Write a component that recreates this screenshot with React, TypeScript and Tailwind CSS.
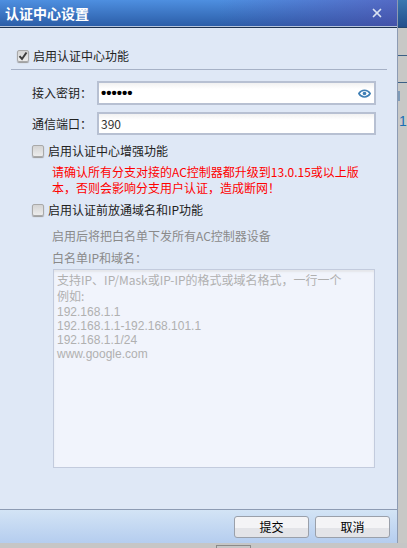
import React from 'react';
import { X } from 'lucide-react';

const font = { fontFamily: '"Noto Sans CJK SC", "Liberation Sans", sans-serif' };
const latin = { fontFamily: '"Liberation Sans", sans-serif' };

const Checkbox = ({ checked }: { checked?: boolean }) => (
  <span className="flex h-[12px] w-[12px] shrink-0 items-center justify-center rounded-[2px] border border-[#a9a9a9] bg-gradient-to-b from-[#d4d4d4] to-[#ececec] shadow-[0_1px_1px_#9a9a9a]">
    {checked && (
      <svg width="10" height="10" viewBox="0 0 10 10">
        <path d="M1.5 5.2 L4 8 L8.5 1.5" fill="none" stroke="#3c3c3c" strokeWidth="2" />
      </svg>
    )}
  </span>
);

const Eye = () => (
  <svg width="13" height="9" viewBox="0 0 13 9">
    <path d="M0.8 4.5 C3.5 0 9.5 0 12.2 4.5 C9.5 9 3.5 9 0.8 4.5 Z" fill="none" stroke="#3f7fb5" strokeWidth="1.5" />
    <circle cx="6.5" cy="4.5" r="1.8" fill="#3f7fb5" />
  </svg>
);

const Field = ({ label, children }: { label: string; children: React.ReactNode }) => (
  <div className="flex h-full items-center">
    <label className="w-[65px] text-[#222]">{label}</label>
    <div className="flex h-full w-[279px] items-center border-2 border-[#b7c0d2] bg-gradient-to-b from-[#f1f1f1] to-white to-[30%] pl-[2px] pr-[3px]">
      {children}
    </div>
  </div>
);

const Button = ({ text }: { text: string }) => (
  <button className="flex h-[22px] w-[75px] items-center justify-center rounded-[3px] border border-[#9aa0aa] bg-[linear-gradient(#f4f4f6_0%,#f4f4f6_55%,#e3e4e8_56%,#e3e4e8_100%)] text-[12px] text-black">
    {text}
  </button>
);

export default function App() {
  return (
    <div className="flex h-[548px] w-[407px] flex-col overflow-hidden bg-[#c6c6c6] text-[12px] leading-[16px]" style={font}>
      <div className="flex h-[543px] shrink-0">
        <div className="flex w-[398px] shrink-0 flex-col border-r border-[#8d9bb3] bg-[#dfe8f6]">
          <div className="flex h-[28px] shrink-0 items-center justify-between border-b border-b-[#1e3350] bg-[linear-gradient(90deg,transparent_55%,rgba(90,70,170,0.5)_100%),linear-gradient(#4e8fe0,#2a5ca6)] pb-[2px] pl-[5px] pr-[13px] shadow-[inset_0_-1px_0_#b7c4da]">
            <span className="text-[14px] font-bold text-white">认证中心设置</span>
            <X size={14} strokeWidth={3} className="text-[#d9e2f2]" />
          </div>

          <div className="min-h-0 flex-1 pt-[20px]">
            <div className="flex h-[16px] items-center gap-[4px] pl-[17px] text-[#222]">
              <Checkbox checked />
              <span>启用认证中心功能</span>
            </div>
            <div className="ml-[11px] mt-[5px] h-[1px] w-[376px] bg-[#a6b1c6]" />

            <div className="flex flex-col gap-[7px] pl-[32px] pt-[11px]">
              <div className="h-[24px]">
                <Field label="接入密钥：">
                  <span className="flex-1 text-[15px] font-bold text-black" style={latin}>••••••</span>
                  <Eye />
                </Field>
              </div>
              <div className="h-[23px]">
                <Field label="通信端口：">
                  <span className="text-[#333]">390</span>
                </Field>
              </div>
            </div>

            <div className="mt-[8px] flex h-[16px] items-center gap-[4px] pl-[32px] text-[#222]">
              <Checkbox />
              <span>启用认证中心增强功能</span>
            </div>
            <p className="ml-[52px] mt-[5px] w-[320px] text-[#ff0000]">
              请确认所有分支对接的AC控制器都升级到13.0.15或以上版本，否则会影响分支用户认证，造成断网！
            </p>
            <div className="mt-[6px] flex h-[16px] items-center gap-[4px] pl-[32px] text-[#222]">
              <Checkbox />
              <span>启用认证前放通域名和IP功能</span>
            </div>
            <p className="ml-[52px] mt-[10px] text-[#8a8a8a]">启用后将把白名单下发所有AC控制器设备</p>
            <p className="ml-[52px] mt-[6px] text-[#8a8a8a]">白名单IP和域名：</p>
            <div className="ml-[53px] mt-[3px] h-[199px] w-[322px] border border-[#c3cbdd] bg-[#f1f4fc] pl-[3px] pt-[2px] text-[#b0b0b0] shadow-[inset_0_2px_2px_#e4e6ea]">
              <p>支持IP、IP/Mask或IP-IP的格式或域名格式，一行一个</p>
              <p className="mb-[1px]">例如:</p>
              <div className="leading-[14px]" style={latin}>
                <p>192.168.1.1</p>
                <p>192.168.1.1-192.168.101.1</p>
                <p>192.168.1.1/24</p>
                <p>www.google.com</p>
              </div>
            </div>
          </div>

          <div className="flex h-[34px] shrink-0 items-center justify-end gap-[6px] border-t border-[#8d9bb3] bg-gradient-to-b from-[#d3e4f5] to-[#b5cdef] pr-[7px]">
            <Button text="提交" />
            <Button text="取消" />
          </div>
        </div>
        <div className="flex flex-1 flex-col bg-[#c8c8c6]">
          <div className="h-[28px] shrink-0 border-b border-[#24476e] bg-gradient-to-b from-[#3b78b0] to-[#234f8c]" />
          <div className="h-[28px] shrink-0 border-b border-[#3b5f85]" />
          <div className="h-[27px] shrink-0 border-b border-[#3b5f85]" />
          <div className="mt-[8px] h-[10px] w-[2px] shrink-0 bg-[#7f9bb8]" />
          <div className="pl-[1px] pt-[12px] text-[14px] leading-[16px] text-[#1a6fb5]" style={latin}>1</div>
        </div>
      </div>
      <div className="ml-[216px] mt-[2px] h-[3px] w-[35px] shrink-0 border border-b-0 border-[#8a8a8a]" />
    </div>
  );
}
